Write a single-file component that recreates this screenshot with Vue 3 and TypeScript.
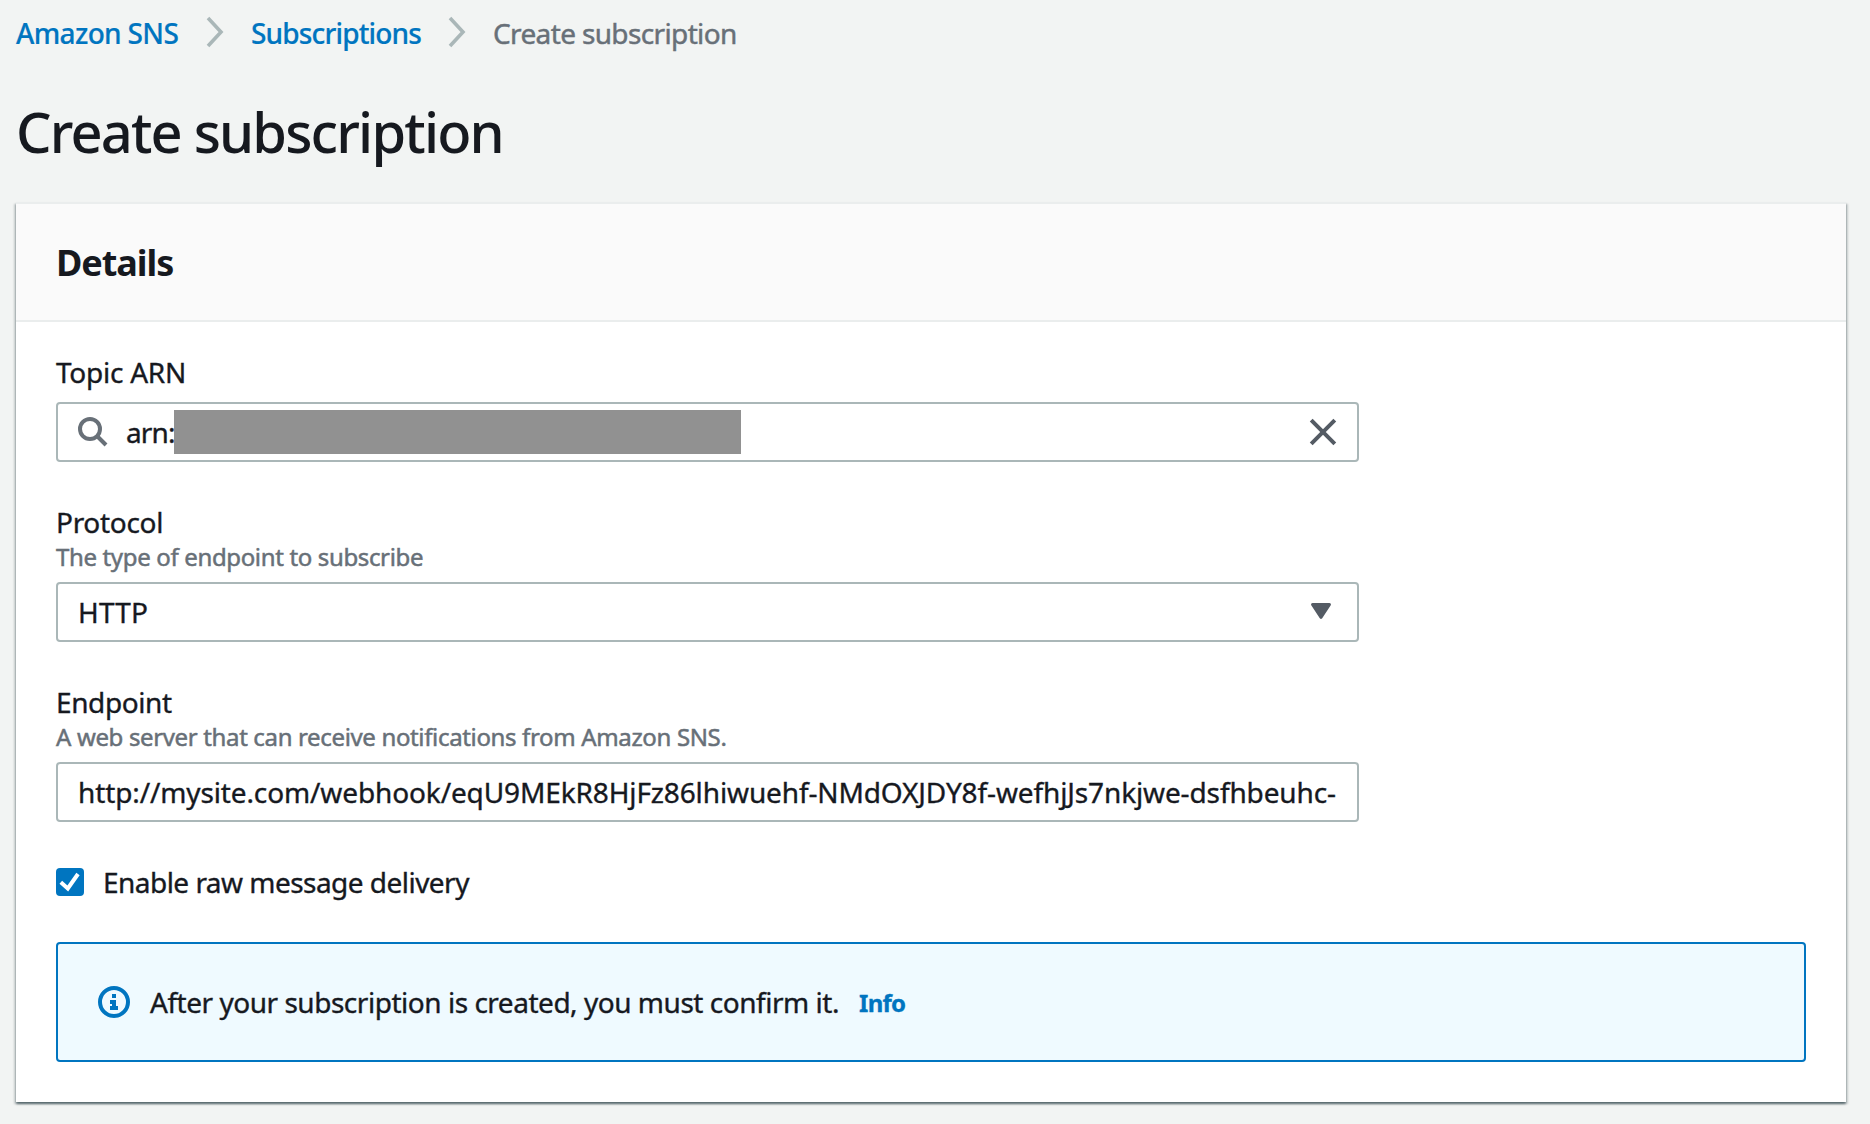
<script setup lang="ts">
import { ref } from 'vue'

const protocol = ref('HTTP')
const endpoint = ref('http://mysite.com/webhook/eqU9MEkR8HjFz86lhiwuehf-NMdOXJDY8f-wefhjJs7nkjwe-dsfhbeuhc-')
const rawDelivery = ref(true)
</script>

<template>
  <main class="page">
    <nav class="breadcrumbs">
      <a class="crumb crumb-home">Amazon SNS</a>
      <svg class="chevron" width="20" height="32" viewBox="0 0 20 32"><path d="M2 2 15 16 2 30" /></svg>
      <a class="crumb crumb-list">Subscriptions</a>
      <svg class="chevron" width="20" height="32" viewBox="0 0 20 32"><path d="M2 2 15 16 2 30" /></svg>
      <span class="crumb current">Create subscription</span>
    </nav>

    <h1>Create subscription</h1>

    <section class="panel">
      <header class="panel-header"><h2>Details</h2></header>
      <div class="panel-body">
        <div class="field topic">
          <label class="label">Topic ARN</label>
          <div class="control search">
            <svg class="search-icon" width="30" height="30" viewBox="0 0 30 30">
              <circle cx="12" cy="12" r="10" />
              <path d="m19 19 9 9" />
            </svg>
            <span class="arn">arn:</span>
            <span class="redacted"></span>
            <svg class="clear-icon" width="28" height="28" viewBox="0 0 28 28"><path d="m2.2 2.2 23.6 23.6M25.8 2.2 2.2 25.8" /></svg>
          </div>
        </div>

        <div class="field">
          <label class="label protocol-label">Protocol</label>
          <p class="hint">The type of endpoint to subscribe</p>
          <div class="control select">
            <span class="protocol">{{ protocol }}</span>
            <svg class="caret" width="20" height="18" viewBox="0 0 20 18"><path d="M1.6 0h16.8a1.5 1.5 0 0 1 1.2 2.4l-8.4 12.9a1.5 1.5 0 0 1-2.4 0L.4 2.4A1.5 1.5 0 0 1 1.6 0Z" /></svg>
          </div>
        </div>

        <div class="field">
          <label class="label endpoint-label">Endpoint</label>
          <p class="hint">A web server that can receive notifications from Amazon SNS.</p>
          <div class="control"><span class="url">{{ endpoint }}</span></div>
        </div>

        <div class="check-row">
          <span class="checkbox" role="checkbox" :aria-checked="rawDelivery">
            <svg v-if="rawDelivery" width="28" height="28" viewBox="0 0 28 28"><path d="m4.8 14.3 7 6.2L22 6" /></svg>
          </span>
          <span class="check-label">Enable raw message delivery</span>
        </div>

        <div class="alert">
          <svg class="info-icon" width="32" height="32" viewBox="0 0 32 32">
            <circle cx="16" cy="16" r="14" />
            <path d="M14 8h4v4h-4zM12 14h6v6h2v4h-8v-4h2v-2h-2z" />
          </svg>
          <span class="alert-text">After your subscription is created, you must confirm it.</span>
          <a class="info-link">Info</a>
        </div>
      </div>
    </section>
  </main>
</template>

<style>
body {
  margin: 0;
  background: #f2f4f3;
}
</style>

<style scoped>
.page {
  box-sizing: border-box;
  height: 1124px;
  padding: 10px 24px 0 16px;
  overflow: hidden;
  background: #f2f4f3;
  color: #16191f;
  font: 400 28px/44px "Noto Sans", "Open Sans", sans-serif;
  -webkit-text-stroke: 0.35px currentColor;
  white-space: nowrap;
}
svg {
  display: block;
  flex: none;
  fill: none;
}
.breadcrumbs {
  display: flex;
  align-items: center;
  height: 44px;
}
.crumb {
  padding-top: 1px;
  color: #0075c0;
  font-weight: 500;
  -webkit-text-stroke: 0.2px currentColor;
}
.crumb-home {
  width: 190px;
  letter-spacing: -0.65px;
}
.crumb-list {
  width: 197px;
  margin-left: 1px;
  letter-spacing: -0.84px;
}
.crumb.current {
  margin-left: 1px;
  color: #687078;
  font-weight: 400;
  letter-spacing: -0.636px;
  -webkit-text-stroke: 0.45px currentColor;
}
.chevron {
  margin-right: 24px;
  stroke: #aab7b8;
  stroke-width: 3.6;
}
h1 {
  margin: 43px 0 37px;
  font-size: 56px;
  font-weight: 500;
  line-height: 68px;
  letter-spacing: -1.83px;
  -webkit-text-stroke: 0;
}
.panel {
  box-sizing: border-box;
  height: 900px;
  background: #fff;
  border-top: 2px solid #eaeded;
  box-shadow: 0 2px 2px 0 rgba(0, 28, 36, 0.5), 2px 2px 2px 0 rgba(0, 28, 36, 0.15), -2px 2px 2px 0 rgba(0, 28, 36, 0.15);
}
.panel-header {
  padding: 37px 40px 35px;
  background: #fafafa;
  border-bottom: 2px solid #eaeded;
}
h2 {
  margin: 0;
  font-size: 36px;
  font-weight: 700;
  line-height: 44px;
  letter-spacing: -1.05px;
  -webkit-text-stroke: 0;
}
.panel-body {
  display: flex;
  flex-direction: column;
  padding: 30px 40px 0;
}
.field {
  width: 1303px;
  margin-bottom: 40px;
}
.label {
  display: block;
  line-height: 40px;
  letter-spacing: -0.25px;
}
.topic .label {
  margin-bottom: 10px;
}
.protocol-label {
  letter-spacing: -0.3px;
}
.endpoint-label {
  letter-spacing: -0.4px;
}
.hint {
  margin: -1px 0 9px;
  color: #687078;
  font-size: 24px;
  line-height: 32px;
  letter-spacing: -0.35px;
  -webkit-text-stroke: 0.5px currentColor;
}
.control {
  display: flex;
  align-items: center;
  box-sizing: border-box;
  height: 60px;
  padding: 0 20px;
  background: #fff;
  border: 2px solid #aab7b8;
  border-radius: 4px;
}
.search-icon {
  margin-right: 18px;
  stroke: #687078;
  stroke-width: 4;
}
.arn {
  width: 48px;
  letter-spacing: -0.86px;
}
.redacted {
  width: 567px;
  height: 44px;
  background: #919191;
}
.clear-icon {
  margin-left: auto;
  stroke: #545b64;
  stroke-width: 4;
}
.select {
  justify-content: space-between;
  padding-right: 26px;
}
.protocol {
  letter-spacing: 0.2px;
}
.caret {
  fill: #545b64;
}
.url {
  letter-spacing: -0.123px;
}
.check-row {
  display: flex;
  align-items: center;
  height: 44px;
  margin: -2px 0 38px;
}
.checkbox {
  width: 28px;
  height: 28px;
  margin-right: 19px;
  background: #0075c0;
  border-radius: 4px;
}
.checkbox svg {
  stroke: #fff;
  stroke-width: 4;
}
.check-label {
  letter-spacing: -0.53px;
}
.alert {
  display: flex;
  align-items: center;
  box-sizing: border-box;
  height: 120px;
  padding-left: 40px;
  background: #effaff;
  border: 2px solid #0075c0;
  border-radius: 4px;
}
.info-icon {
  margin-right: 20px;
}
.info-icon circle {
  stroke: #0075c0;
  stroke-width: 4;
}
.info-icon path {
  fill: #0075c0;
}
.alert-text {
  width: 709px;
  letter-spacing: -0.475px;
}
.info-link {
  padding-top: 2px;
  color: #0075c0;
  font-size: 24px;
  font-weight: 700;
  letter-spacing: -0.7px;
  -webkit-text-stroke: 0.3px currentColor;
}
</style>
